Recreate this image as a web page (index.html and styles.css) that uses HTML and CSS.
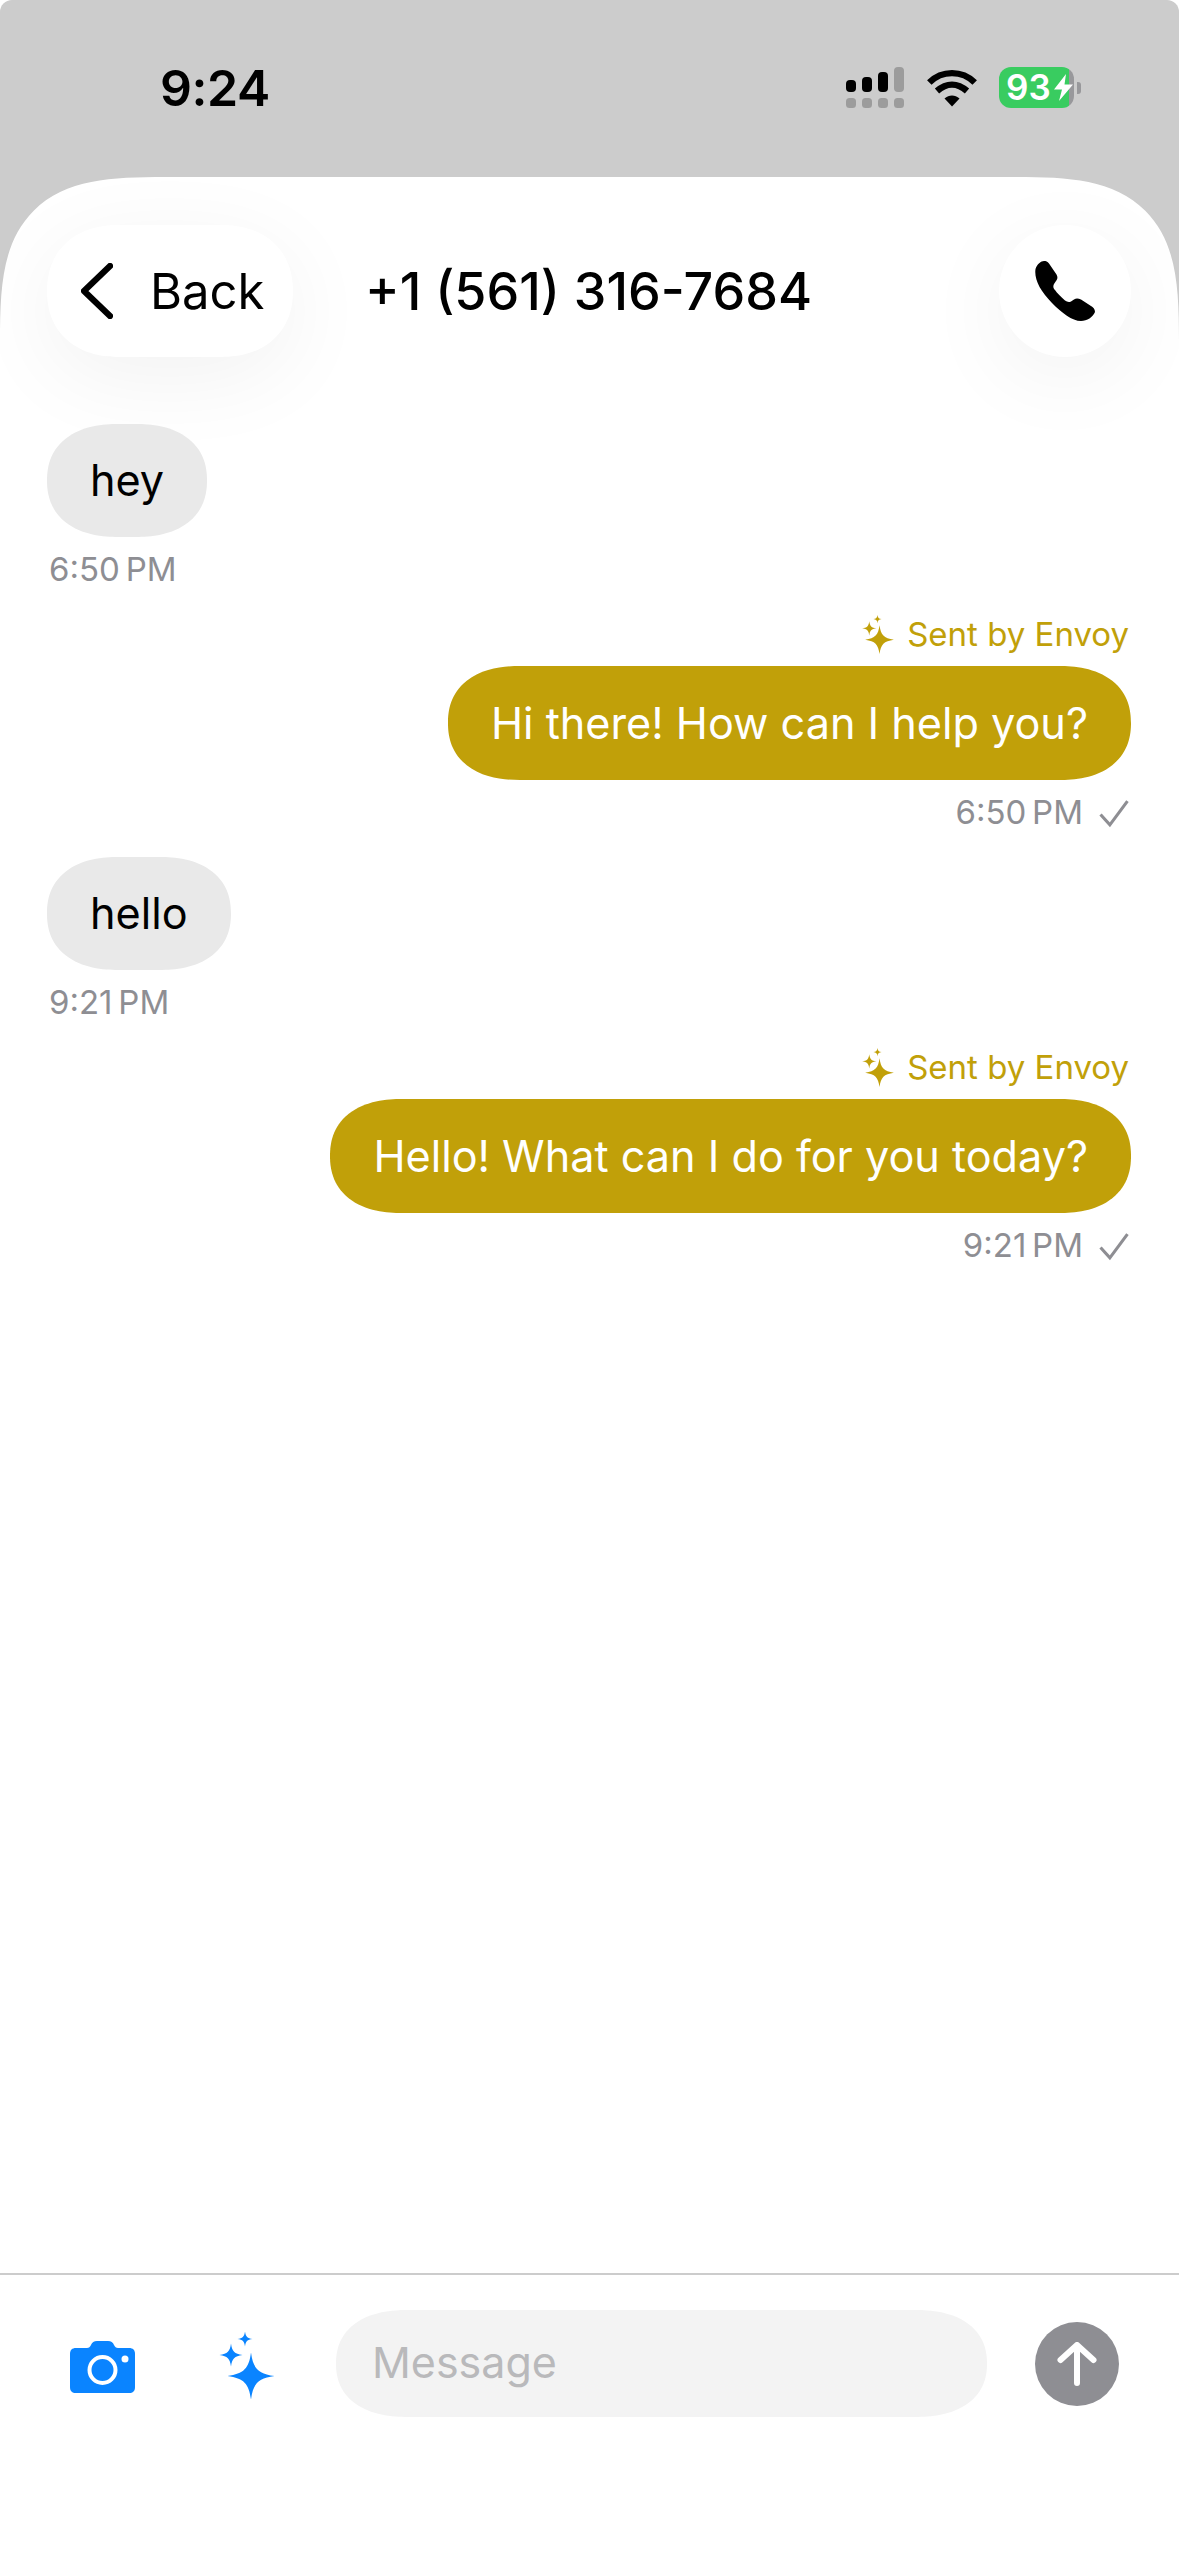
FILE: index.html
```html
<!DOCTYPE html>
<html lang="en">
<head>
<meta charset="utf-8">
<title>Chat</title>
<link rel="stylesheet" href="styles.css">
</head>
<body>
<svg class="defs" width="0" height="0" aria-hidden="true"><defs>
  <path id="spark" d="M0 -1C.09 -.32 .3 -.1 1 0C.3 .1 .09 .32 0 1C-.09 .32 -.3 .1 -1 0C-.3 -.1 -.09 -.32 0 -1Z"/>
</defs></svg>
<div class="app">
  <div class="status">
    <span class="clock">9:24</span>
    <div class="status-icons">
      <svg class="signal" width="58" height="41" viewBox="0 0 58 41">
        <g fill="#000"><rect x="0" y="13" width="10" height="12" rx="4"/><rect x="16" y="10" width="10" height="15" rx="4"/><rect x="32" y="5" width="10" height="20" rx="4"/></g>
        <g fill="#9c9c9c"><rect x="48" y="0" width="10" height="25" rx="4"/><rect x="0" y="31" width="10" height="10" rx="3.5"/><rect x="16" y="31" width="10" height="10" rx="3.5"/><rect x="32" y="31" width="10" height="10" rx="3.5"/><rect x="48" y="31" width="10" height="10" rx="3.5"/></g>
      </svg>
      <svg class="wifi" width="50" height="38" viewBox="0 0 50 38">
        <g fill="none" stroke="#000" stroke-width="6.4"><path d="M2.3 13.5C15 1 35 1 47.7 13.5"/><path d="M10 22C19.500 13.500 30.500 13.500 40 22"/></g>
        <path d="M17.500 29.500C22 25.500 28 25.500 32.500 29.500L25 37.500Z" fill="#000"/>
      </svg>
      <div class="battery">
        <div class="cell"><span class="pct">93</span>
          <svg class="bolt" width="19" height="27" viewBox="0 0 19 26" preserveAspectRatio="none"><path d="M12 0L0 15H8L5 26L19 10H10.500Z" fill="#fff"/></svg>
        </div>
        <span class="nub"></span>
      </div>
    </div>
  </div>
  <main class="sheet">
    <header class="topbar">
      <button class="pill back">
        <svg width="32" height="56" viewBox="0 0 32 56"><path d="M29 3L3 28L29 53" fill="none" stroke="#000" stroke-width="6.200" stroke-linecap="round" stroke-linejoin="round"/></svg>
        <span>Back</span>
      </button>
      <h1 class="title">+1 (561) 316-7684</h1>
      <button class="pill call" aria-label="Call">
        <svg width="60" height="60" viewBox="0 0 60 60"><path d="M9 0C6 0 2 3 .5 8C-1 18 5 30 17 42C27 52 37 60 46 60C52 60 58 56 60 51C60 48 58 46 56 45L46 38.500C43 37 41 37 39 38.500L36 40.500C34 41.500 32 41 30 39.500C26 36 22 32 20 29C18 27 18 25 19 23L21 20C22.500 18 23 16 21.500 13.500L14 2.500C12.500 .5 11 0 9 0Z" fill="#000"/></svg>
      </button>
    </header>
    <section class="thread">
      <article class="msg in">
        <div class="bubble"><span class="txt">hey</span></div>
        <div class="meta">6:50 PM</div>
      </article>
      <article class="msg out">
        <div class="sent-by"><svg width="33" height="39" viewBox="0 0 32 38"><use href="#spark" transform="translate(17 24) scale(14)" /><use href="#spark" transform="translate(7 13) scale(7)"/><use href="#spark" transform="translate(15 4) scale(4)"/></svg><span>Sent by Envoy</span></div>
        <div class="bubble">Hi there! How can I help you?</div>
        <div class="meta"><span>6:50 PM</span><svg width="32" height="29" viewBox="0 0 30 28"><path d="M2 15L11 25L28 2" fill="none" stroke="#8e8e93" stroke-width="3"/></svg></div>
      </article>
      <article class="msg in">
        <div class="bubble"><span class="txt">hello</span></div>
        <div class="meta">9:21 PM</div>
      </article>
      <article class="msg out">
        <div class="sent-by"><svg width="33" height="39" viewBox="0 0 32 38"><use href="#spark" transform="translate(17 24) scale(14)"/><use href="#spark" transform="translate(7 13) scale(7)"/><use href="#spark" transform="translate(15 4) scale(4)"/></svg><span>Sent by Envoy</span></div>
        <div class="bubble">Hello! What can I do for you today?</div>
        <div class="meta"><span>9:21 PM</span><svg width="32" height="29" viewBox="0 0 30 28"><path d="M2 15L11 25L28 2" fill="none" stroke="#8e8e93" stroke-width="3"/></svg></div>
      </article>
    </section>
    <footer class="composer">
      <svg class="camera" width="65" height="52" viewBox="0 0 65 52">
        <path d="M6 7H17C19 7 20 6 21 4C22 1.500 24 0 27 0H38C41 0 43 1.500 44 4C45 6 46 7 48 7H59C63 7 65 9 65 13V46C65 50 63 52 59 52H6C2 52 0 50 0 46V13C0 9 2 7 6 7Z" fill="#0a84ff"/>
        <circle cx="32.500" cy="29" r="13" fill="none" stroke="#fff" stroke-width="4"/>
        <circle cx="55" cy="18" r="3.500" fill="#fff"/>
      </svg>
      <svg class="magic" width="58" height="70" viewBox="0 0 58 70">
        <g fill="#0a84ff"><use href="#spark" transform="translate(26 7) scale(7.500)"/><use href="#spark" transform="translate(12 23) scale(11.500)"/><use href="#spark" transform="translate(32 44) scale(23.500)" stroke="#fff" stroke-width=".12" paint-order="stroke"/></g>
      </svg>
      <div class="field"><span class="hint">Message</span></div>
      <button class="send" aria-label="Send">
        <svg width="40" height="44" viewBox="0 0 40 44"><path d="M20 41V4M3.500 18L20 3L36.500 18" fill="none" stroke="#fff" stroke-width="6" stroke-linecap="round" stroke-linejoin="round"/></svg>
      </button>
    </footer>
  </main>
</div>
</body>
</html>
```
FILE: styles.css
```css
* { box-sizing: border-box; }
html, body { margin: 0; padding: 0; background: #fff; }
body { font-family: Inter, "Liberation Sans", sans-serif; color: #000; }
.defs { position: absolute; }
.app { width: 1179px; height: 2556px; display: flex; flex-direction: column; background: #ccc; border-radius: 12px 12px 0 0; overflow: hidden; }

.status { height: 177px; flex: none; display: flex; justify-content: space-between; padding: 0 98px 0 160px; }
.clock { font-size: 50px; font-weight: 600; line-height: 50px; margin-top: 63px; letter-spacing: -.4px; }
.status-icons { display: flex; align-items: flex-start; padding-top: 67px; }
.signal { display: block; }
.wifi { display: block; margin: 2px 0 0 23px; }
.battery { display: flex; align-items: center; margin-left: 22px; }
.cell { width: 75px; height: 41px; border-radius: 12px; background: linear-gradient(to right, #39cc60 94%, #98989b 94%); display: flex; align-items: center; padding-left: 7px; }
.pct { color: #fff; font-size: 35px; font-weight: 600; line-height: 41px; }
.bolt { margin-left: 3px; }
.nub { width: 4px; height: 12px; margin-left: 3px; background: #98989b; border-radius: 0 3px 3px 0; }

.sheet { flex: 1; display: flex; flex-direction: column; background: #fff; border-radius: 165px 165px 0 0; corner-shape: superellipse(1.6); }

.topbar { display: flex; align-items: center; padding: 48px 48px 0 47px; }
.pill { height: 132px; border: 0; background: #fff; border-radius: 72px / 66px; corner-shape: superellipse(1.15); box-shadow: 0 20px 90px rgba(0,0,0,.055); display: flex; align-items: center; font-family: inherit; color: #000; padding: 0; }
.back { width: 246px; padding-left: 34px; gap: 37px; font-size: 49px; }
.back span { line-height: 60px; padding-top: 2px; }
.call { width: 132px; margin-left: auto; justify-content: center; border-radius: 50%; corner-shape: round; }
.title { margin: 2px 0 0 72px; font-size: 52px; font-weight: 500; line-height: 60px; }

.thread { flex: 1; display: flex; flex-direction: column; gap: 25px; padding: 67px 48px 0 47px; }
.msg { display: flex; flex-direction: column; }
.msg.out { align-items: flex-end; }
.msg.in { align-items: flex-start; }
.bubble { height: 113px; padding: 0 43px; border-radius: 72px / 57px; corner-shape: superellipse(1.2); display: flex; align-items: center; font-size: 43.2px; }
.txt { margin-bottom: 2px; }
.in .bubble { background: #e9e9e9; color: #000; }
.out .bubble { height: 114px; padding: 0 43px 0 43px; background: #c1a009; color: #fff; }
.meta { margin-top: 12px; height: 40px; display: flex; align-items: center; font-size: 33px; color: #8e8e93; word-spacing: -3.500px; }
.in .meta { padding-left: 2px; }
.out .meta svg { margin: 2px 1px 0 15px; }
.sent-by { height: 40px; margin-bottom: 12px; display: flex; align-items: center; gap: 12px; font-size: 33px; color: #c1a009; fill: #c1a009; padding-right: 2px; }

.composer { flex: none; height: 283px; border-top: 2px solid #ccc; display: flex; align-items: flex-start; padding: 35px 60px 0 70px; background: #fff; }
.camera { margin-top: 31px; flex: none; }
.magic { margin: 22px 0 0 84px; flex: none; }
.field { width: 652px; height: 107px; margin-left: 59px; background: #f3f3f3; border-radius: 72px / 54px; corner-shape: superellipse(1.2); display: flex; align-items: center; padding-left: 36px; font-size: 43px; color: #b9b9bb; }
.hint { margin-bottom: 4px; }
.send { width: 84px; height: 84px; margin: 12px 0 0 48px; border: 0; padding: 0; border-radius: 50%; background: #8e8e93; display: flex; align-items: center; justify-content: center; }
```
